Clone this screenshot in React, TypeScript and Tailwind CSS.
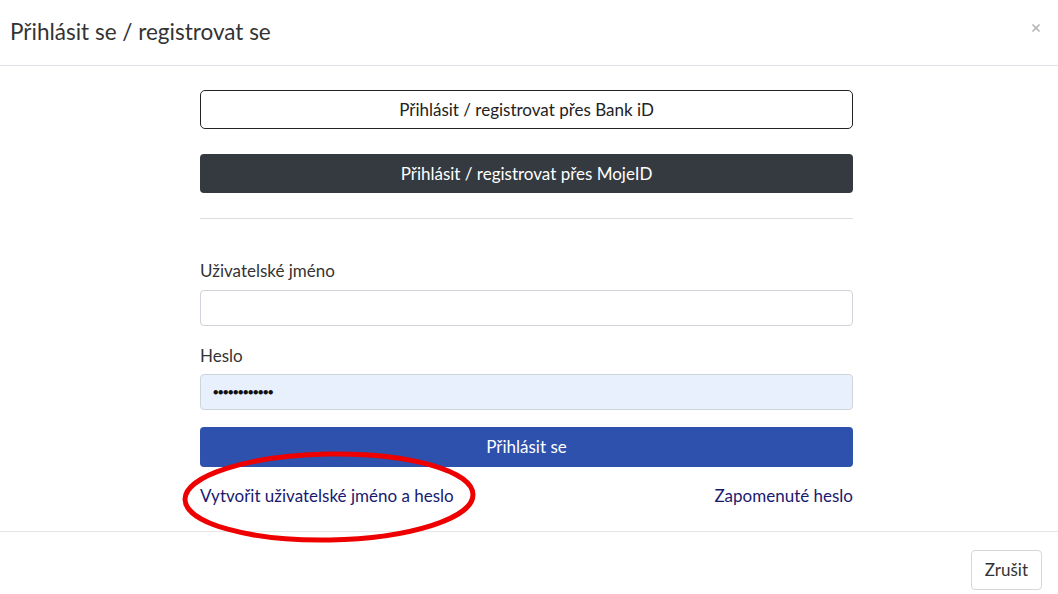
import { X } from "lucide-react";

export default function App() {
  return (
    <div
      className="relative w-[1058px] h-[594px] bg-white text-[#212529] overflow-hidden"
      style={{ fontFamily: '"Lato", "Open Sans", sans-serif' }}
    >
      {/* header */}
      <div className="h-[66px] border-b border-[#dee2e6] flex items-center justify-between pl-[10px] pr-[16px]">
        <h5 className="text-[22.5px] leading-none text-[#333] pb-[1px]">Přihlásit se / registrovat se</h5>
        <X className="w-[12px] h-[12px] text-[#b5b5b5] -mt-[10px]" strokeWidth={3.5} />
      </div>

      {/* body */}
      <div className="h-[466px] border-b border-[#e5e5e5] pt-[24px] pl-[200px]">
        <div className="w-[653px] flex flex-col">
          <button className="h-[39px] rounded-[5px] border border-[#222] bg-white text-[17px] text-[#222]">
            Přihlásit / registrovat přes Bank iD
          </button>
          <button className="mt-[25px] h-[39px] rounded-[4px] bg-[#343a40] text-[17px] text-white">
            Přihlásit / registrovat přes MojeID
          </button>
          <div className="mt-[25px] border-t border-[#dcdcdc]" />

          <label className="mt-[42px] text-[17px] leading-[20px] text-[#333]">Uživatelské jméno</label>
          <div className="mt-[9px] h-[36px] rounded-[4px] border border-[#ced4da] bg-white" />

          <label className="mt-[20px] text-[17px] leading-[20px] text-[#333]">Heslo</label>
          <div className="mt-[8px] h-[36px] rounded-[4px] border border-[#ced4da] bg-[#e8f0fe] flex items-center px-[12px] text-[9px] tracking-[-0.4px] text-[#111]">
            ●●●●●●●●●●●●
          </div>

          <button className="mt-[17px] h-[40px] rounded-[4px] bg-[#2e51ae] text-[17px] text-white">
            Přihlásit se
          </button>

          <div className="mt-[19px] flex justify-between text-[17px] leading-[20px] text-[#191970]">
            <span>Vytvořit uživatelské jméno a heslo</span>
            <span>Zapomenuté heslo</span>
          </div>
        </div>
      </div>

      {/* footer */}
      <div className="flex justify-end pt-[18px] pr-[16px]">
        <button className="h-[40px] px-[13px] rounded-[4px] border border-[#d6d6d6] bg-white text-[17px] text-[#333]">
          Zrušit
        </button>
      </div>

      {/* red annotation ellipse */}
      <svg className="absolute left-[180px] top-[449px] pointer-events-none" width="300" height="96" viewBox="0 0 300 96">
        <ellipse cx="149" cy="48" rx="144" ry="43" fill="none" stroke="#ee0000" strokeWidth="5" transform="rotate(-1 149 48)" />
      </svg>
    </div>
  );
}
